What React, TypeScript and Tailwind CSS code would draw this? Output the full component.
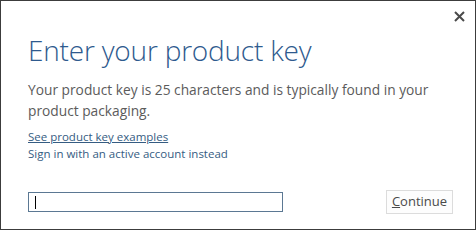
import React from 'react';

export default function App() {
  return (
    <div className="w-[476px] h-[230px] bg-white border border-[#3c3c3c] flex flex-col relative font-['Open_Sans',sans-serif]">
      <button className="absolute right-[10px] top-[9px] w-[12px] h-[12px] flex items-center justify-center">
        <svg width="11" height="11" viewBox="0 0 11 11">
          <path d="M1 1 L10 10 M10 1 L1 10" stroke="#4a4a4a" strokeWidth="2" />
        </svg>
      </button>

      <div className="pl-[27px] pr-[30px] pt-[30px] flex flex-col">
        <h1 className="text-[28px] leading-[38px] font-light text-[#2e5a8e] tracking-[-0.2px]">
          Enter your product key
        </h1>
        <p className="mt-[10px] text-[13.75px] leading-[21px] text-[#5b5b5b]">
          Your product key is 25 characters and is typically found in your product packaging.
        </p>
        <div className="mt-[7px] flex flex-col text-[11.5px] leading-[17px] text-[#355c82]">
          <a href="#" className="underline self-start">See product key examples</a>
          <a href="#" className="self-start">Sign in with an active account instead</a>
        </div>
      </div>

      <div className="mt-auto mb-[15px] pl-[27px] pr-[22px] flex items-center justify-between">
        <div className="w-[255px] h-[20px] border border-[#5b7893] flex items-center pl-[6px]">
          <span className="w-[1px] h-[13px] bg-black" />
        </div>
        <button className="w-[67px] h-[24px] border border-[#dcdcdc] bg-[#fdfdfd] text-[13px] text-[#4a4a4a]">
          <span className="underline">C</span>ontinue
        </button>
      </div>
    </div>
  );
}
